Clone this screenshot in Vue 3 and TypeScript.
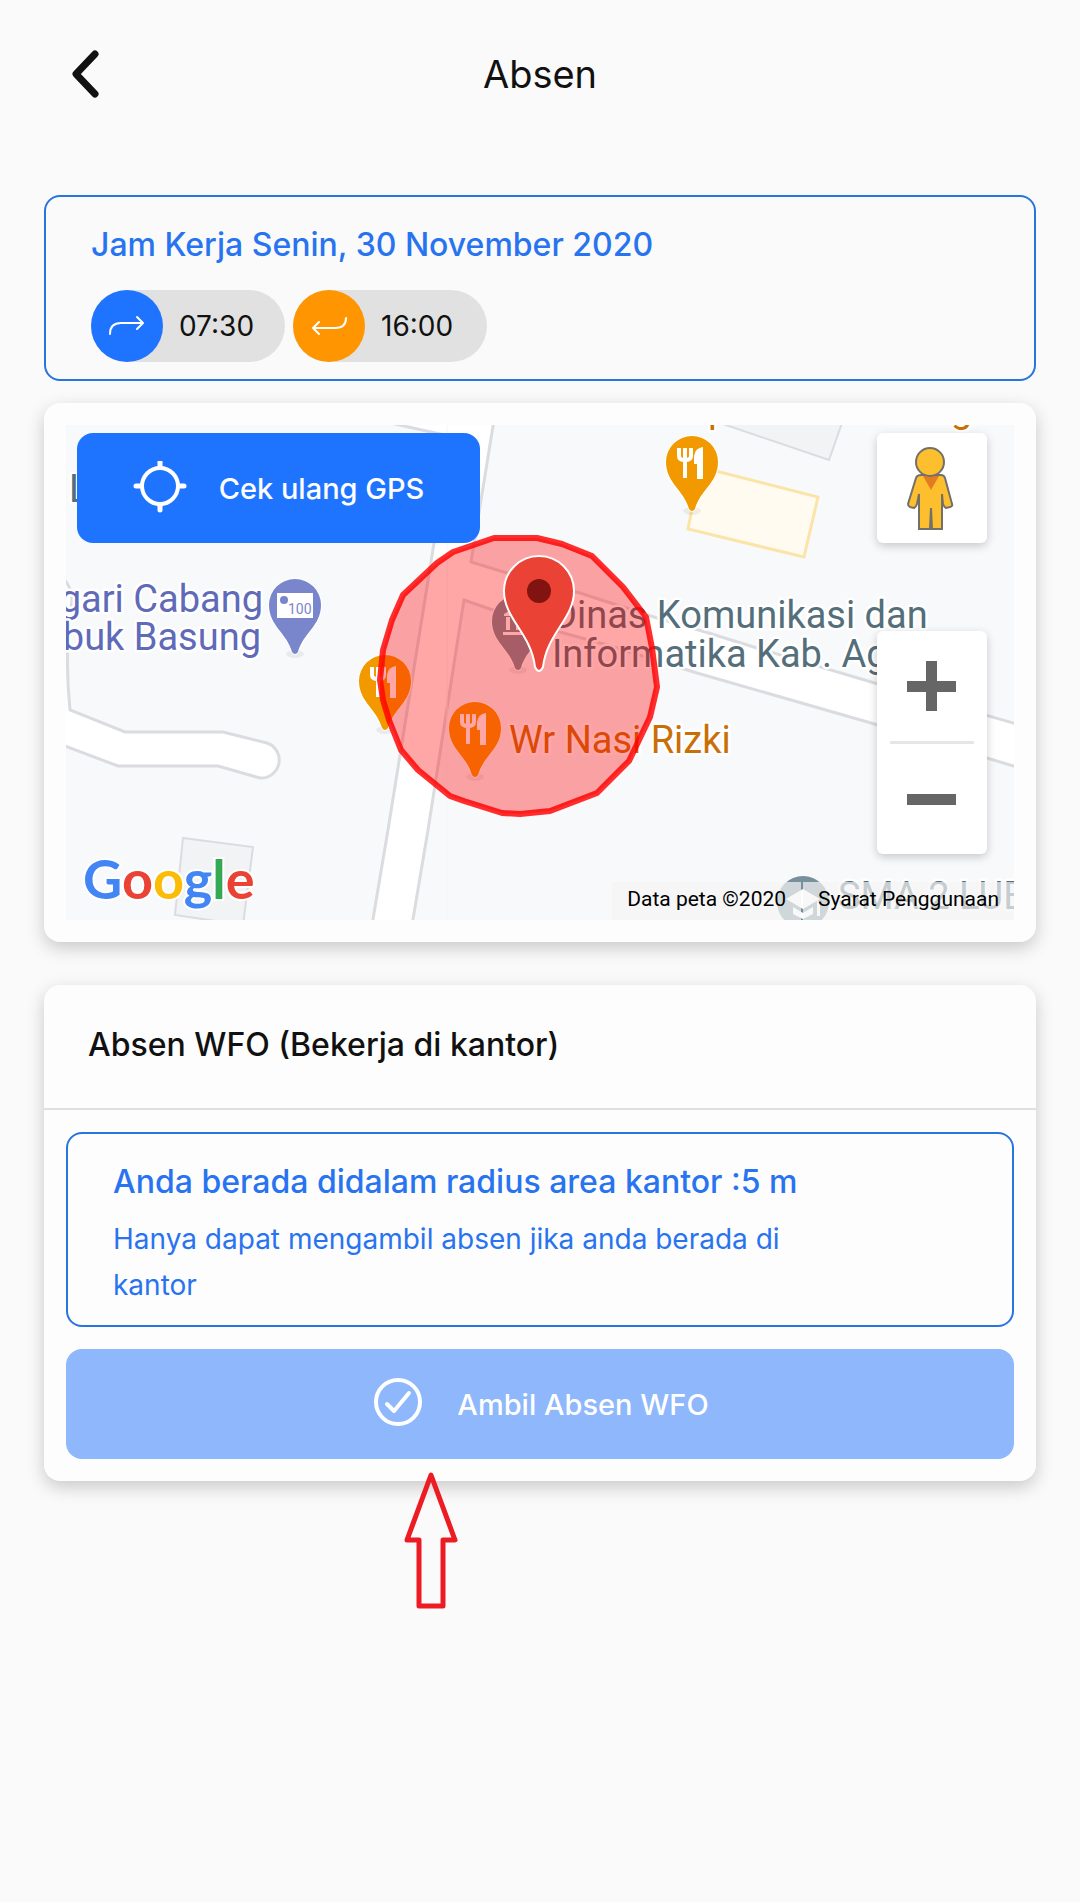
<script setup lang="ts">
interface Shift {
  kind: 'in' | 'out'
  label: string
  time: string
  icon: string
}

const workday = 'Jam Kerja Senin, 30 November 2020'

const shifts: Shift[] = [
  { kind: 'in', label: 'Jam masuk', time: '07:30', icon: 'M19 44C19 37 23 33 30 33H52M46 27L52 33L46 39' },
  { kind: 'out', label: 'Jam pulang', time: '16:00', icon: 'M53 28C53 35 49 38 42 38H20M26 32L20 38L26 44' },
]

const restaurants = [
  { x: 692, y: 462 },
  { x: 385, y: 681 },
  { x: 475, y: 728 },
]

const pinShape = 'M0-26A26 26 0 0 1 26 0C26 21 8 28 3 47Q0 51-3 47C-8 28-26 21-26 0A26 26 0 0 1 0-26Z'

const radiusArea =
  '494,538 537,538 562,544 592,556 623,587 646,617 652,648 657,687 650,717 629,761 597,793 550,811 520,814 502,813 464,801 450,796 418,770 401,750 389,720 383,700 380,680 383,650 392,620 403,595 437,563 453,552'

const distance = 5
</script>

<template>
  <div class="page">
    <header class="topbar">
      <button type="button" class="back" aria-label="Kembali">
        <svg viewBox="0 0 36 56" width="36" height="56" aria-hidden="true">
          <path d="M28 8L9 28L28 48" />
        </svg>
      </button>
      <h1>Absen</h1>
    </header>

    <main>
      <section class="outline hours">
        <h2>{{ workday }}</h2>
        <div class="shifts">
          <div v-for="s in shifts" :key="s.kind" class="pill">
            <span class="dot" :class="s.kind">
              <svg viewBox="0 0 72 72" width="72" height="72" role="img" :aria-label="s.label">
                <path :d="s.icon" />
              </svg>
            </span>
            <time>{{ s.time }}</time>
          </div>
        </div>
      </section>

      <section class="card map-card">
        <div class="map">
          <svg class="tiles" viewBox="66 425 948 495" preserveAspectRatio="xMidYMid slice">
            <!-- roads -->
            <g class="road">
              <path d="M377 420L440 434L452 436L434 543L388 830L372 925H412L428 830L464 600L490 609L560 632L607 645L697 673L878 725L1020 768V725L878 684L757 648L702 631L657 618L580 593L507 573L471 562L494 420Z" />
              <path d="M60 575Q72 586 72 600Q64 650 70 710L125 732H223L267 743A18 18 0 0 1 260 778L218 766H118L60 744Z" />
            </g>
            <path class="seam" d="M447 425V920" />
            <!-- buildings -->
            <path class="building" d="M183 838L253 847L243 925L175 915Z" />
            <path class="building" d="M720 423L829 460L842 423Z" />
            <path class="plaza" d="M700 467L818 497L804 557L688 529Z" />

            <g class="place slate">
              <text x="69" y="502">L</text>
              <text x="552" y="628">Dinas Komunikasi dan</text>
              <text x="552" y="667">Informatika Kab. Ag</text>
              <text x="838" y="909">SMA 2 LUB</text>
            </g>
            <g class="place purple" text-anchor="end">
              <text x="263" y="612">gari Cabang</text>
              <text x="261" y="650">buk Basung</text>
            </g>
            <g class="place amber">
              <text x="509" y="753">Wr Nasi Rizki</text>
              <text x="708" y="422">p</text>
              <text x="951" y="422">g</text>
            </g>

            <!-- place pins -->
            <g transform="translate(295 605)">
              <ellipse class="pin-shadow" cy="49" rx="9" ry="4" />
              <path class="pin" fill="#7986cb" :d="pinShape" />
              <path fill="#fff" d="M-18-12H18V13H-18Z" />
              <circle fill="#7986cb" cx="-11" cy="-5" r="4" />
              <text class="note" x="-7" y="9">100</text>
            </g>
            <g v-for="(r, i) in restaurants" :key="i" :transform="`translate(${r.x} ${r.y})`">
              <ellipse class="pin-shadow" cy="49" rx="9" ry="4" />
              <path class="pin" fill="#f29900" :d="pinShape" />
              <path class="fork" d="M-13-14V-6Q-13-2-7-2Q-1-2-1-6V-14M-7-14V16" />
              <path fill="#fff" d="M11-15V17H5V2H2V-6Q3-14 11-15Z" />
            </g>
            <g transform="translate(518 621)">
              <ellipse class="pin-shadow" cy="49" rx="9" ry="4" />
              <path class="pin" fill="#78909c" :d="pinShape" />
              <path fill="#fff" d="M-14-7L0-15L14-7V-5H-14ZM-12-4H-8V9H-12ZM-2-4H2V9H-2ZM8-4H12V9H8ZM-15 11H15V14H-15Z" />
            </g>
            <g transform="translate(803 902)">
              <circle fill="#78909c" r="26" />
              <path fill="#fff" d="M-17-3L0-13L17-3L0 7ZM-10 5L0 11L10 5V12L0 17L-10 12ZM14-1H17V14H14Z" />
            </g>

            <polygon class="radius" :points="radiusArea" />

            <path
              class="marker"
              d="M539 556A35 35 0 0 1 574 591C574 619 547 633 543 667Q539 675 535 667C531 633 504 619 504 591A35 35 0 0 1 539 556Z"
            />
            <circle fill="#811411" cx="539" cy="591" r="12" />

            <text class="google" x="83" y="899"
              ><tspan fill="#4285f4">G</tspan><tspan fill="#ea4335">o</tspan><tspan fill="#fbbc05">o</tspan
              ><tspan fill="#4285f4">g</tspan><tspan fill="#34a853">l</tspan><tspan fill="#ea4335">e</tspan></text
            >
          </svg>

          <button type="button" class="btn gps">
            <svg viewBox="0 0 54 54" width="54" height="54" aria-hidden="true">
              <circle cx="27" cy="25" r="18" />
              <path class="tick" d="M27 1V6M27 44V49M3 25H8M46 25H51" />
            </svg>
            Cek ulang GPS
          </button>

          <div class="controls">
            <button type="button" class="ctl" aria-label="Street View">
              <svg viewBox="0 0 110 110" width="110" height="110" aria-hidden="true">
                <path
                  class="pegman"
                  d="M44 42H64Q67 42 68 45L75 71Q76 73 73 74L69 75Q67 74 66 71L65 61V96H55L54 75L53 96H42V61L40 71Q39 74 37 75L33 74Q31 73 31 71L39 45Q40 42 44 42Z"
                />
                <path fill="#e27c20" d="M46 43H62L54 57Z" />
                <circle class="pegman" cx="53" cy="29" r="14" />
              </svg>
            </button>
            <div class="zoom">
              <button type="button" aria-label="Perbesar">
                <svg viewBox="0 0 110 110" width="110" height="110" aria-hidden="true">
                  <path fill="#666" d="M49 30H60V50H79V61H60V80H49V61H30V50H49Z" />
                </svg>
              </button>
              <hr />
              <button type="button" aria-label="Perkecil">
                <svg viewBox="0 0 110 110" width="110" height="110" aria-hidden="true">
                  <path fill="#666" d="M30 50H79V61H30Z" />
                </svg>
              </button>
            </div>
          </div>

          <div class="credits">
            <span>Data peta ©2020</span>
            <a href="#syarat">Syarat Penggunaan</a>
          </div>
        </div>
      </section>

      <section class="card office">
        <h2>Absen WFO (Bekerja di kantor)</h2>
        <div class="office-body">
          <div class="outline info">
            <h3>Anda berada didalam radius area kantor :{{ distance }} m</h3>
            <p>Hanya dapat mengambil absen jika anda berada di kantor</p>
          </div>
          <button type="button" class="btn submit" disabled>
            <svg viewBox="0 0 54 54" width="54" height="54" aria-hidden="true">
              <circle cx="27" cy="25" r="22" />
              <path d="M16 27L23 34L38 16" />
            </svg>
            Ambil Absen WFO
          </button>
        </div>
        <svg class="pointer" viewBox="0 0 56 140" width="56" height="140" aria-hidden="true">
          <path d="M28 4L52 69H40V135H16V69H4Z" />
        </svg>
      </section>
    </main>
  </div>
</template>

<style>
body {
  margin: 0;
  background: #fafafa;
}
</style>

<style scoped>
.page {
  min-height: 100vh;
  background: #fafafa;
  color: #111;
  font-family: Inter, Roboto, sans-serif;
}
h1,
h2,
h3,
p {
  margin: 0;
  font-weight: 500;
}
button {
  padding: 0;
  border: 0;
  background: none;
  font: inherit;
}
svg {
  display: block;
}

.topbar {
  display: grid;
  grid-template-columns: 1fr auto 1fr;
  align-items: center;
  height: 148px;
  padding: 0 67px;
}
.back {
  justify-self: start;
}
.back path {
  fill: none;
  stroke: #111;
  stroke-width: 7;
  stroke-linecap: round;
  stroke-linejoin: round;
}
h1 {
  font-size: 38px;
  line-height: 48px;
  font-weight: 400;
}

main {
  padding: 47px 44px;
}
.outline {
  border: 2px solid #2874e0;
  border-radius: 16px;
  color: #2874f0;
}
h2,
h3 {
  font-size: 32px;
  line-height: 44px;
}

.hours {
  padding: 26px 45px 17px;
}
.shifts {
  display: flex;
  gap: 8px;
  margin-top: 23px;
}
.pill {
  display: flex;
  align-items: center;
  width: 194px;
  border-radius: 36px;
  background: #e1e1e1;
  color: #111;
}
.dot {
  border-radius: 50%;
}
.dot.in {
  background: #1f74ff;
}
.dot.out {
  background: #ff9500;
}
.dot path {
  fill: none;
  stroke: #fff;
  stroke-width: 2;
  stroke-linecap: round;
  stroke-linejoin: round;
}
time {
  margin-left: 16px;
  font-size: 28px;
}

.card {
  border-radius: 16px;
  background: #fdfdfd;
  box-shadow: 0 6px 18px rgba(0, 0, 0, 0.2);
}
.map-card {
  margin-top: 22px;
  padding: 22px;
}
.map {
  position: relative;
  height: 495px;
  overflow: hidden;
  background: #f8f9fb;
}
.tiles {
  width: 100%;
  height: 100%;
}
.road path {
  fill: #fff;
  stroke: #dadce0;
  stroke-width: 3;
}
.seam {
  stroke: #f4f5f7;
}
.building {
  fill: #f1f3f4;
  stroke: #dadce0;
  stroke-width: 2;
}
.plaza {
  fill: #fffbf0;
  stroke: #fbe4a8;
  stroke-width: 3;
}
.place {
  font-family: Roboto, sans-serif;
  font-size: 38px;
  stroke: #fff;
  stroke-width: 5;
  stroke-linejoin: round;
  paint-order: stroke;
}
.slate {
  fill: #546e7a;
}
.purple {
  fill: #5f6ab8;
}
.amber {
  fill: #c96f08;
}
.pin {
  stroke: #fff;
  stroke-width: 2;
  paint-order: stroke;
}
.pin-shadow {
  fill: #000;
  opacity: 0.06;
}
.note {
  fill: #7986cb;
  font-family: Roboto, sans-serif;
  font-size: 14px;
}
.fork {
  fill: none;
  stroke: #fff;
  stroke-width: 4;
}
.radius {
  fill: rgba(255, 0, 0, 0.35);
  stroke: rgba(255, 0, 0, 0.82);
  stroke-width: 6;
  stroke-linejoin: round;
}
.marker {
  fill: #ea4335;
  stroke: #fff;
  stroke-width: 2;
}
.google {
  font-family: Lato, sans-serif;
  font-size: 54px;
  font-weight: 700;
  stroke: #fff;
  stroke-width: 4;
  paint-order: stroke;
}

.btn {
  display: flex;
  align-items: center;
  justify-content: center;
  gap: 32px;
  height: 110px;
  border-radius: 16px;
  color: #fff;
  font-size: 29px;
  font-weight: 500;
}
.btn svg {
  fill: none;
  stroke: #fff;
  stroke-width: 4;
  stroke-linecap: round;
  stroke-linejoin: round;
}
.btn .tick {
  stroke-width: 5;
}
.gps {
  position: absolute;
  top: 8px;
  left: 11px;
  width: 403px;
  background: #1f74ff;
}
.controls {
  position: absolute;
  top: 8px;
  right: 27px;
  display: flex;
  flex-direction: column;
  gap: 88px;
}
.ctl,
.zoom {
  border-radius: 6px;
  background: #fff;
  box-shadow: 0 3px 10px rgba(0, 0, 0, 0.2);
}
.zoom button {
  display: block;
}
.zoom hr {
  height: 3px;
  margin: 0 13px;
  border: 0;
  background: #e6e6e6;
}
.pegman {
  fill: #fdbf2d;
  stroke: #73706a;
  stroke-width: 2;
}
.credits {
  position: absolute;
  right: 0;
  bottom: 0;
  display: flex;
  gap: 2px;
  color: #000;
  font: 21px/34px Roboto, sans-serif;
}
.credits > * {
  padding: 0 15px 4px;
  background: rgba(245, 245, 245, 0.7);
  color: inherit;
  text-decoration: none;
}

.office {
  position: relative;
  margin-top: 43px;
}
.office > h2 {
  padding: 38px 44px 41px;
  border-bottom: 2px solid #e0e0e0;
}
.office-body {
  display: grid;
  gap: 22px;
  padding: 22px;
}
.info {
  padding: 26px 180px 17px 45px;
}
.info p {
  margin-top: 12px;
  font-size: 28px;
  line-height: 46px;
  font-weight: 400;
}
.submit {
  background: #8eb7fc;
}
.pointer {
  position: absolute;
  bottom: -130px;
  left: 359px;
}
.pointer path {
  fill: none;
  stroke: #ed1c24;
  stroke-width: 5;
  stroke-linejoin: round;
}
</style>
